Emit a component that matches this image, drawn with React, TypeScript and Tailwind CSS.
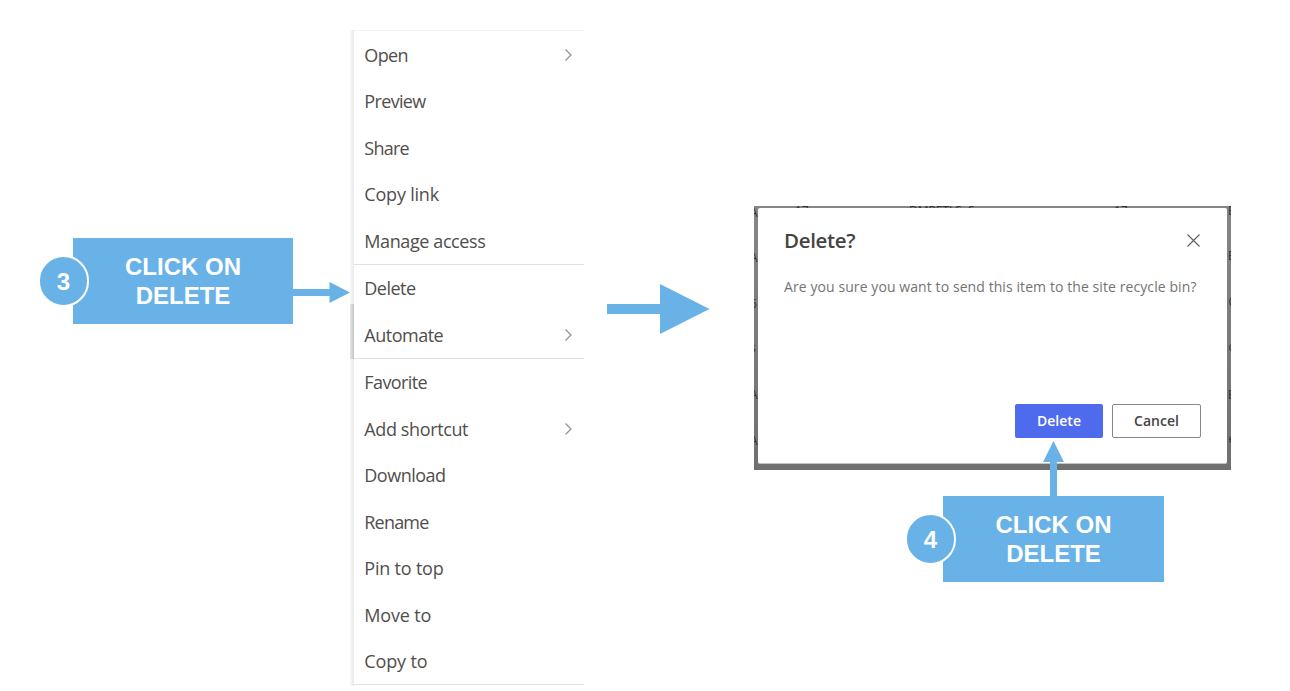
import React from "react";

const groups = [
  [
    { label: "Open", sub: true, ls: "tracking-[-0.6px]" },
    { label: "Preview", ls: "tracking-[-0.65px]" },
    { label: "Share", ls: "tracking-[-0.75px]" },
    { label: "Copy link", ls: "tracking-[-0.2px]" },
    { label: "Manage access", ls: "tracking-[-0.4px]" },
  ],
  [
    { label: "Delete", ls: "tracking-[-0.5px]" },
    { label: "Automate", sub: true, ls: "tracking-[-0.5px]" },
  ],
  [
    { label: "Favorite", ls: "tracking-[-0.6px]" },
    { label: "Add shortcut", sub: true, ls: "tracking-[-0.38px]" },
    { label: "Download", ls: "tracking-[-0.5px]" },
    { label: "Rename", ls: "tracking-[-0.8px]" },
    { label: "Pin to top", ls: "tracking-[-0.2px]" },
    { label: "Move to", ls: "tracking-[-0.15px]" },
    { label: "Copy to", ls: "tracking-[-0.15px]" },
  ],
];

// Page text that shows around the edges of the dialog, under its overlay.
const pageText = [
  { text: "A", pos: "-left-[4px] top-[-1px]" },
  { text: "A", pos: "-left-[4px] top-[44px]" },
  { text: "6", pos: "-left-[4px] top-[90px]" },
  { text: "s", pos: "-left-[4px] top-[134px]" },
  { text: "A", pos: "-left-[4px] top-[181px]" },
  { text: "A", pos: "-left-[4px] top-[227px]" },
  { text: "E", pos: "left-[474px] top-[-3px]" },
  { text: "E", pos: "left-[474px] top-[42px]" },
  { text: "C", pos: "left-[474.5px] top-[88px]" },
  { text: "c", pos: "left-[474.5px] top-[133px]" },
  { text: "E", pos: "left-[474px] top-[181px]" },
  { text: "e", pos: "left-[474.5px] top-[225px]" },
  { text: "17", pos: "left-[41px] top-[-3px]" },
  { text: "DMPETLS  S", pos: "left-[155px] top-[-3px]" },
  { text: "17", pos: "left-[360px] top-[-3px]" },
];

function Callout({ step, size, badge }: { step: number; size: string; badge: string }) {
  return (
    <div
      className={`relative flex h-[86px] shrink-0 items-center justify-center bg-[#68b2e8] text-center text-[24px] leading-[29px] font-bold text-white ${size}`}
    >
      <span>
        CLICK ON
        <br />
        DELETE
      </span>
      <span
        className={`absolute top-[17px] flex h-[52px] w-[51px] items-center justify-center rounded-full border-2 border-white bg-[#68b2e8] ${badge}`}
      >
        {step}
      </span>
    </div>
  );
}

function Menu() {
  return (
    <div className="mt-[30px] flex h-[656px] w-[234px] shrink-0 overflow-hidden">
      <div className="w-[4px] shrink-0 bg-linear-to-r from-[#fafafa] to-[#e8e8e8] pt-[274px]">
        <div className="h-[55px] bg-linear-to-r from-[#e6e6e6] to-[#c4c4c4]" />
      </div>
      <ul className="flex-1 border-t border-[#f3f3f3] pt-[0.45px] font-['Open_Sans',sans-serif] text-[18px] text-[#504e4c]">
        {groups.map((g, i) => (
          <li key={i} className="border-b border-[#e1e1e1]">
            {g.map((m) => (
              <div key={m.label} className="flex h-[46.5px] items-center justify-between pt-[0.8px] pr-[10px] pl-[10.3px]">
                <span className={m.ls}>{m.label}</span>
                {m.sub && (
                  <svg className="mb-[1px]" width="11" height="12" viewBox="0 0 11 12" fill="none" stroke="#949494" strokeWidth="1.3">
                    <path d="M2.5 0.5 8 6 2.5 11.5" />
                  </svg>
                )}
              </div>
            ))}
          </li>
        ))}
      </ul>
    </div>
  );
}

export default function App() {
  return (
    <main className="flex h-[691px] w-[1290px] items-start overflow-hidden bg-white font-['Liberation_Sans',sans-serif]">
      <div className="flex pt-[238px] pl-[73px]">
        <Callout step={3} size="w-[220px]" badge="-left-[35px]" />
        <svg className="mt-[44px] w-[57px]" height="21" viewBox="0 0 57 21" fill="#68b2e8">
          <path d="M0 7H36.500V0L57 10.500 36.500 21V14H0z" />
        </svg>
      </div>
      <Menu />
      <svg className="mt-[284px] ml-[23px] shrink-0" width="103" height="50" viewBox="0 0 103 50" fill="#68b2e8">
        <path d="M0 20H53V0L102.500 25 53 50V30H0z" />
      </svg>
      <div className="mt-[206px] ml-[44px] w-[477px] shrink-0">
        <div className="relative h-[264px] overflow-hidden bg-linear-to-b from-[#868686] to-[#707070] px-[4px] pt-[2px]">
          <div aria-hidden="true" className="font-['Open_Sans',sans-serif] text-[12px] leading-[16px] whitespace-pre text-[#303030]">
            {pageText.map((t, i) => (
              <span key={i} className={`absolute ${t.pos}`}>
                {t.text}
              </span>
            ))}
          </div>
          <section className="relative flex h-[256px] flex-col rounded-[2px] border-b border-[#c4c4c4] bg-white px-[26px] font-['Open_Sans',sans-serif]">
            <header className="mt-[19px] flex h-[28px] items-center justify-between">
              <h1 className="-mt-[1px] text-[20.5px] leading-[27px] font-semibold tracking-[-0.35px] text-[#454443]">Delete?</h1>
              <svg className="mr-[1.5px] mb-[2px]" width="13" height="13" viewBox="0 0 13 13" stroke="#5c5c5c" strokeWidth="1.1">
                <path d="M0.500 0.500 12.500 12.500M12.500 0.500 0.500 12.500" />
              </svg>
            </header>
            <p className="mt-[22px] text-[14px] leading-[20px] tracking-[0.085px] whitespace-nowrap text-[#757371]">
              Are you sure you want to send this item to the site recycle bin?
            </p>
            <div className="mt-[107px] flex justify-end gap-[9px] text-[14px] leading-[20px] font-semibold">
              <button className="h-[34px] w-[88px] rounded-[2px] bg-[#4f6bed] text-white">Delete</button>
              <button className="h-[34px] w-[89px] rounded-[2px] border border-[#8a8886] text-[#454443]">Cancel</button>
            </div>
          </section>
        </div>
        <div className="relative -mt-[29px] ml-[189px] flex w-[221px] flex-col items-center">
          <svg width="21" height="55" viewBox="0 0 21 55" fill="#68b2e8">
            <path d="M10.500 0 21 21H14V55H7V21H0z" />
          </svg>
          <Callout step={4} size="w-[221px]" badge="-left-[38px]" />
        </div>
      </div>
    </main>
  );
}
